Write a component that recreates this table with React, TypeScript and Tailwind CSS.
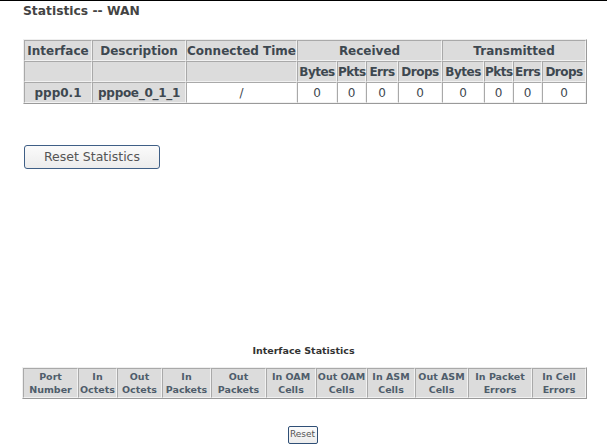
const RX = ["Bytes", "Pkts", "Errs", "Drops"];

const cell = "border border-t-[#a9a9a9] border-l-[#a9a9a9] border-b-[#f2f2f2] border-r-[#f2f2f2] p-0 overflow-visible";

const IFACE_COLS: [string, string, string][] = [
  ["Port", "Number", "w-[55px]"],
  ["In", "Octets", "w-[39px]"],
  ["Out", "Octets", "w-[45px]"],
  ["In", "Packets", "w-[49px]"],
  ["Out", "Packets", "w-[55px]"],
  ["In OAM", "Cells", "w-[50px]"],
  ["Out OAM", "Cells", "w-[51px]"],
  ["In ASM", "Cells", "w-[48px]"],
  ["Out ASM", "Cells", "w-[53px]"],
  ["In Packet", "Errors", "w-[64px]"],
  ["In Cell", "Errors", "w-[54px]"],
];

export default function App() {
  return (
    <div
      className="h-[444px] w-[607px] overflow-hidden border-t border-black bg-white text-[#404040]"
      style={{ fontFamily: '"DejaVu Sans", Verdana, sans-serif' }}
    >
      <div className="pl-[23px] pt-[1px] text-[12.3px] font-bold leading-[18px] text-[#444]">Statistics -- WAN</div>

      {/* WAN table */}
      <table className="ml-[23px] mt-[19px] w-[562px] table-fixed border-separate border-spacing-0 border border-t-[#efefef] border-l-[#efefef] border-b-[#9a9a9a] border-r-[#9a9a9a] bg-[#dcdcdc] text-[12px] text-[#3e4850]">
        <colgroup>
          <col className="w-[68px]" />
          <col className="w-[94px]" />
          <col className="w-[111px]" />
          <col className="w-[40px]" />
          <col className="w-[29px]" />
          <col className="w-[32px]" />
          <col className="w-[44px]" />
          <col className="w-[42px]" />
          <col className="w-[29px]" />
          <col className="w-[29px]" />
          <col className="w-[44px]" />
        </colgroup>
        <tbody>
          <tr className="h-[21px] font-bold">
            <td className={`${cell} text-center`}>Interface</td>
            <td className={`${cell} text-center`}>Description</td>
            <td className={`${cell} text-center whitespace-nowrap`}>Connected Time</td>
            <td colSpan={4} className={`${cell} text-center`}>Received</td>
            <td colSpan={4} className={`${cell} text-center`}>Transmitted</td>
          </tr>
          <tr className="h-[21px] font-bold">
            <td className={cell} />
            <td className={cell} />
            <td className={cell} />
            {[...RX, ...RX].map((h, i) => (
              <td key={i} className={`${cell} text-center tracking-[-0.5px] whitespace-nowrap`}>{h}</td>
            ))}
          </tr>
          <tr className="h-[21px]">
            <td className={`${cell} text-center font-bold`}>ppp0.1</td>
            <td className={`${cell} text-center font-bold whitespace-nowrap tracking-[-0.3px]`}>pppoe_0_1_1</td>
            <td className={`${cell} bg-white text-center`}>/</td>
            {Array.from({ length: 8 }).map((_, i) => (
              <td key={i} className={`${cell} bg-white text-center`}>0</td>
            ))}
          </tr>
        </tbody>
      </table>

      <button
        type="button"
        className="ml-[24px] mt-[41px] h-[24px] w-[136px] rounded-[3px] border border-[#3f5f86] bg-gradient-to-b from-[#fbfbfb] to-[#ececec] text-[12.5px] text-[#555]"
      >
        Reset Statistics
      </button>

      <div className="mt-[175px] text-center text-[9.5px] font-bold leading-[14px] text-[#333]">Interface Statistics</div>

      {/* interface table */}
      <table className="ml-[22px] mt-[9px] w-[563px] table-fixed border-separate border-spacing-0 border border-t-[#efefef] border-l-[#efefef] border-b-[#9a9a9a] border-r-[#9a9a9a] bg-[#dcdcdc] text-[9.5px] font-bold leading-[13px] text-[#4f5d6b]">
        <colgroup>
          {IFACE_COLS.map(([, , w], i) => (
            <col key={i} className={w} />
          ))}
        </colgroup>
        <tbody>
          <tr className="h-[30px]">
            {IFACE_COLS.map(([a, b], i) => (
              <td key={i} className={`${cell} text-center whitespace-nowrap`}>
                {a}
                <br />
                {b}
              </td>
            ))}
          </tr>
        </tbody>
      </table>

      <div className="mt-[27px] flex justify-center pr-[2px]">
        <button
          type="button"
          className="h-[18px] w-[30px] rounded-[2px] border border-[#2f4f76] bg-gradient-to-b from-[#fbfbfb] to-[#ececec] text-[9px] text-[#555]"
        >
          Reset
        </button>
      </div>
    </div>
  );
}
